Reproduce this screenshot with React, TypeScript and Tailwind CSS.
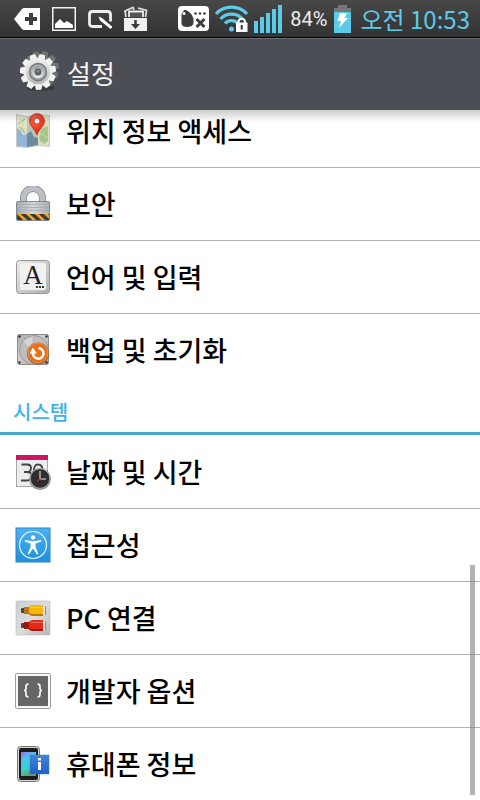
import type { ReactNode } from "react";

const TEETH = [0, 1, 2, 3, 4, 5, 6, 7, 8, 9, 10];

function Gear({ fill }: { fill: string }) {
  return (
    <g fill={fill}>
      <circle r="14" />
      {TEETH.map((n) => (
        <path key={n} d="M-4-12 L-2.7-18 H2.7 L4-12 Z" transform={`rotate(${(n * 360) / 11 + 14})`} />
      ))}
    </g>
  );
}

function GearIcon() {
  return (
    <svg width="40" height="44" viewBox="0 0 40 44" aria-hidden="true">
      <defs>
        <linearGradient id="gearFace" x1="0" y1="-18" x2="0" y2="18" gradientUnits="userSpaceOnUse">
          <stop offset="0" stopColor="#f6f6f6" />
          <stop offset="0.5" stopColor="#d6d6d6" />
          <stop offset="1" stopColor="#a4a4a4" />
        </linearGradient>
        <linearGradient id="gearHub" x1="0" y1="0" x2="0" y2="1">
          <stop offset="0" stopColor="#9a9c9e" />
          <stop offset="1" stopColor="#f2f2f2" />
        </linearGradient>
      </defs>
      <ellipse cx="21" cy="37" rx="14" ry="3" fill="#2f3237" opacity="0.7" />
      <g transform="translate(21 18)">
        <Gear fill="#707274" />
      </g>
      <g transform="translate(18 21)">
        <Gear fill="url(#gearFace)" />
        <circle r="8.5" fill="#a9abad" stroke="#75787a" strokeWidth="1.4" />
        <circle r="6" fill="url(#gearHub)" />
        <circle r="3.4" fill="#566069" />
        <circle cy="-1" r="1.6" fill="#7f8a93" />
      </g>
    </svg>
  );
}

function Icon({ children }: { children: ReactNode }) {
  return (
    <svg className="shrink-0" width="36" height="36" viewBox="0 0 36 36" aria-hidden="true">
      {children}
    </svg>
  );
}

function MapIcon() {
  return (
    <Icon>
      <defs>
        <radialGradient id="pin" cx="0.4" cy="0.3" r="0.7">
          <stop offset="0" stopColor="#ff6a50" />
          <stop offset="1" stopColor="#dd2413" />
        </radialGradient>
      </defs>
      <path d="M1 1 L12 3 L23 1 L35 2 V34 L23 33 L12 35 L1 34 Z" fill="#c9c9c4" />
      <path d="M2 2 L12 4 V34 L2 33 Z" fill="#dfe3d0" />
      <path d="M12 4 L23 2 V32 L12 34 Z" fill="#b3c8b4" />
      <path d="M23 2 L34 3 V33 L23 32 Z" fill="#d9dfc3" />
      <path d="M2 15 L5 17 L8 22 L12 21 V34 L2 33 Z" fill="#94b4da" />
      <path d="M12 21 L16 18 L19 24 L23 25 V32 L12 34 Z" fill="#6d8b9d" />
      <path d="M26 16 L33 13 V28 L29 31 L24 25 Z" fill="#a5c886" />
      <path d="M4 5 L9 9 L7 15 L12 17 M13 8 L17 14 M24 20 L33 25 M28 4 L31 12" stroke="#eed184" strokeWidth="1" fill="none" />
      <path d="M3 11 L10 6 M5 14 L10 20 M25 29 L32 19" stroke="#a6c59a" strokeWidth="1.5" fill="none" />
      <path d="M22 22 C20 16 14.5 13 14.5 8 A7.5 7.5 0 0 1 29.5 8 C29.5 13 24 16 22 22 Z" fill="url(#pin)" stroke="#b51b0e" strokeWidth="0.6" />
      <circle cx="22" cy="8" r="3" fill="#f5efee" stroke="#a81d12" strokeWidth="0.7" />
    </Icon>
  );
}

function LockIcon() {
  return (
    <Icon>
      <defs>
        <linearGradient id="lockBody" x1="0" x2="1" y1="0" y2="0">
          <stop offset="0" stopColor="#a5aaae" />
          <stop offset="0.5" stopColor="#d3d7da" />
          <stop offset="1" stopColor="#a9adb1" />
        </linearGradient>
        <clipPath id="hazard">
          <rect x="2" y="28" width="32" height="6" />
        </clipPath>
      </defs>
      <path d="M8.5 17 V12 A9.5 9.5 0 0 1 27.5 12 V17" fill="none" stroke="#888d91" strokeWidth="7" />
      <path d="M8.5 17 V12 A9.5 9.5 0 0 1 27.5 12 V17" fill="none" stroke="#bcc0c4" strokeWidth="5.4" />
      <rect x="1.5" y="15.5" width="33" height="19" rx="1" fill="url(#lockBody)" stroke="#80868b" />
      <path d="M2 18.5 H34 M2 21.5 H34 M2 24.5 H34" stroke="#a5aaae" strokeWidth="0.8" />
      <g clipPath="url(#hazard)">
        <rect x="2" y="28" width="32" height="6" fill="#f9a51b" />
        <path d="M-2 27 L7 35 M7 27 L16 35 M16 27 L25 35 M25 27 L34 35 M34 27 L43 35" stroke="#3b3b3b" strokeWidth="3.5" />
      </g>
    </Icon>
  );
}

function LanguageIcon() {
  return (
    <Icon>
      <defs>
        <linearGradient id="keycap" x1="0" y1="0" x2="1" y2="1">
          <stop offset="0" stopColor="#ececec" />
          <stop offset="1" stopColor="#b0b0b0" />
        </linearGradient>
      </defs>
      <rect x="1.5" y="1.5" width="33" height="33" rx="3" fill="url(#keycap)" stroke="#999" />
      <rect x="5" y="4" width="26" height="27" rx="2" fill="#f1f1f1" />
      <text x="18" y="25" textAnchor="middle" fontSize="27" fontFamily="Liberation Serif, serif" fill="#222">
        A
      </text>
      <path d="M21 27h2v2h-2z M24 27h2v2h-2z M27 27h2v2h-2z" fill="#333" />
    </Icon>
  );
}

function BackupIcon() {
  return (
    <Icon>
      <defs>
        <linearGradient id="disk" x1="0" y1="0" x2="1" y2="1">
          <stop offset="0" stopColor="#a8a8a8" />
          <stop offset="0.4" stopColor="#cfcfcf" />
          <stop offset="1" stopColor="#a2a2a2" />
        </linearGradient>
      </defs>
      <rect x="2.5" y="2.5" width="31" height="30" rx="2" fill="url(#disk)" stroke="#8d8d8d" />
      <circle cx="19" cy="18" r="14.5" fill="#bebebe" stroke="#999" strokeWidth="1" />
      <path d="M8 9 L18 4 L16 18 Z" fill="#d4d4d4" />
      <circle cx="4.5" cy="4.5" r="1.2" fill="#333" />
      <circle cx="31.5" cy="4.5" r="1.2" fill="#333" />
      <circle cx="4.5" cy="30.5" r="1.2" fill="#333" />
      <circle cx="31.5" cy="30.5" r="1.2" fill="#333" />
      <circle cx="23" cy="21.5" r="11" fill="#9b5a2c" />
      <circle cx="23" cy="21" r="10" fill="#ea6d17" stroke="#f3a468" strokeWidth="0.8" />
      <path d="M23.5 16 A5.3 5.3 0 1 1 18 20.5" fill="none" stroke="#fff" strokeWidth="2.6" />
      <path d="M14.5 21.5 L18 15.5 L21.8 21.5 Z" fill="#fff" />
    </Icon>
  );
}

function CalendarIcon() {
  return (
    <Icon>
      <rect x="1.5" y="1.5" width="31" height="31" fill="#ececef" stroke="#a5a5a8" />
      <rect x="1" y="1" width="32" height="5" fill="#cf1468" />
      <path
        d="M6.5 10.5 H12 Q16 10.5 16 14 Q16 18 12 18 H9 M12 18 Q16.5 18 16.5 22 Q16.5 26.5 12 26.5 H6"
        fill="none"
        stroke="#444"
        strokeWidth="1.8"
      />
      <path d="M19 18 Q18.5 10.5 23 10.5 Q27.5 10.5 27.5 16" fill="none" stroke="#444" strokeWidth="1.8" />
      <circle cx="25" cy="25" r="10.8" fill="#8f8f8f" />
      <circle cx="25" cy="24.5" r="9.8" fill="#2e2e30" stroke="#c5c5c5" strokeWidth="0.8" />
      <path d="M25 17 V25 H31" fill="none" stroke="#e5e5e5" strokeWidth="1.1" />
      <path d="M25 25 L22 27" stroke="#dd3326" strokeWidth="0.8" />
      <circle cx="25" cy="25" r="1" fill="#dd3326" />
    </Icon>
  );
}

function AccessibilityIcon() {
  return (
    <Icon>
      <defs>
        <linearGradient id="access" x1="0" y1="0" x2="0" y2="1">
          <stop offset="0" stopColor="#4db2f3" />
          <stop offset="1" stopColor="#1e90dd" />
        </linearGradient>
      </defs>
      <rect x="1" y="1" width="34" height="34" fill="url(#access)" stroke="#2b83bd" />
      <circle cx="18" cy="18" r="13.5" fill="none" stroke="#e9f6ff" strokeWidth="1.2" />
      <circle cx="18" cy="10.5" r="2.2" fill="#fff" />
      <path
        d="M10 13 L16 14 H20 L26 13 L26.3 14.5 L20.5 16.5 V20 L23.5 27 L22 27.6 L18 21.5 L14 27.6 L12.5 27 L15.5 20 V16.5 L9.7 14.5 Z"
        fill="#fff"
      />
    </Icon>
  );
}

function Plug({ main, dark }: { main: string; dark: string }) {
  return (
    <g>
      <rect x="6" y="3" width="4" height="5" rx="1" fill="#46484a" />
      <rect x="9" y="2" width="6" height="7" fill={dark} />
      <path d="M14 1.5 L17 0 H28 V11 H17 L14 9.5 Z" fill={main} />
      <path d="M14 8 L17 9 H28 V11 H17 L14 9.5 Z" fill={dark} />
      <path d="M16 2.5 H28" stroke="#fff" strokeOpacity="0.3" />
      <rect x="28" y="1" width="3" height="9" fill="#e0e4e7" />
      <path d="M30.5 1 V10" stroke="#8a8f93" />
    </g>
  );
}

function PcIcon() {
  return (
    <Icon>
      <defs>
        <linearGradient id="panel" x1="0" y1="0" x2="1" y2="1">
          <stop offset="0" stopColor="#cdcfd1" />
          <stop offset="0.5" stopColor="#dddddd" />
          <stop offset="1" stopColor="#b5b7b9" />
        </linearGradient>
      </defs>
      <rect x="1" y="1" width="34" height="34" rx="1" fill="url(#panel)" stroke="#b6b8ba" strokeWidth="0.6" />
      <g transform="translate(0 5)">
        <Plug main="#f5b70c" dark="#b97809" />
      </g>
      <g transform="translate(0 20)">
        <Plug main="#e32a1b" dark="#9f180e" />
      </g>
    </Icon>
  );
}

function DeveloperIcon() {
  return (
    <Icon>
      <rect x="0.5" y="0.5" width="35" height="35" rx="1" fill="#f7f7f7" stroke="#9c9c9c" />
      <rect x="3" y="3" width="30" height="30" fill="#666" />
      <path
        d="M13.5 11 Q11 11 11 13.5 V15.5 Q11 17.5 9 17.5 Q11 17.5 11 19.5 V21.5 Q11 24 13.5 24 M22.5 11 Q25 11 25 13.5 V15.5 Q25 17.5 27 17.5 Q25 17.5 25 19.5 V21.5 Q25 24 22.5 24"
        fill="none"
        stroke="#fff"
        strokeWidth="1.6"
      />
    </Icon>
  );
}

function PhoneIcon() {
  return (
    <Icon>
      <defs>
        <linearGradient id="screen" x1="0" y1="0" x2="0.4" y2="1">
          <stop offset="0" stopColor="#a56ae6" />
          <stop offset="0.35" stopColor="#48c6f0" />
          <stop offset="0.7" stopColor="#37cfd8" />
          <stop offset="1" stopColor="#61a557" />
        </linearGradient>
        <linearGradient id="info" x1="0" y1="0" x2="0" y2="1">
          <stop offset="0" stopColor="#3f84e2" />
          <stop offset="1" stopColor="#1f60c8" />
        </linearGradient>
      </defs>
      <rect x="2.5" y="0.5" width="22" height="35" rx="3" fill="#d5d5d5" stroke="#777" />
      <rect x="4" y="2" width="19" height="32" rx="2" fill="#1c1c1f" />
      <rect x="6" y="6" width="15" height="24" fill="url(#screen)" />
      <rect x="15" y="9" width="19" height="19" fill="url(#info)" stroke="#4d78b8" strokeWidth="0.5" />
      <path d="M23 12h3v2.5h-3z M23 16h3v8h-3z" fill="#fff" />
    </Icon>
  );
}

function StatusBar() {
  return (
    <div className="flex h-[38px] shrink-0 items-center border-b border-black bg-linear-to-b from-[#474747] to-[#333333] pl-3.5 pr-2.5">
      <div className="flex items-center gap-3">
        <svg width="26" height="24" viewBox="0 0 26 24" aria-hidden="true">
          <path d="M0 12 L8 2 Q9 1 10 1 H26 V23 H10 Q9 23 8 22 Z" fill="#fff" />
          <path d="M17 6 V18 M11 12 H23" stroke="#3f3f3f" strokeWidth="4" />
        </svg>
        <svg width="24" height="24" viewBox="0 0 24 24" aria-hidden="true">
          <rect x="0.75" y="0.75" width="22.5" height="22.5" fill="none" stroke="#f2f2f2" strokeWidth="1.5" />
          <path d="M3 21 V17 L8 12 L12 16 L15 14 L21 18 V21 Z" fill="#fff" />
        </svg>
        <svg width="24" height="24" viewBox="0 0 24 24" aria-hidden="true">
          <path d="M14 19.5 H4.5 Q1.5 19.5 1.5 16.5 V7.500 Q1.5 4.5 4.5 4.5 H19.5 Q22.5 4.5 22.5 7.5 V14.500" fill="none" stroke="#eee" strokeWidth="2.8" />
          <path d="M10.5 9.5 L14 11 L24.5 20 L22.5 22 L12 13.5 Z" fill="#fff" />
        </svg>
        <svg width="24" height="26" viewBox="0 0 24 26" aria-hidden="true">
          <path d="M2 11 L1 5 L9 1.5 L10 4 M14 2 L22.500 4.500 L21.500 11" fill="none" stroke="#ddd" strokeWidth="1.8" />
          <path d="M5 11 V5.5 H19 V11" fill="#555" stroke="#eee" strokeWidth="1.8" />
          <rect x="0" y="12" width="23" height="13" fill="#f0f0f0" />
          <path d="M11.5 14 V19" stroke="#3b3b3b" strokeWidth="2.5" />
          <path d="M7 18 H16 L11.5 23 Z" fill="#3b3b3b" />
        </svg>
      </div>
      <div className="ml-auto flex items-center gap-1.5">
        <svg width="31" height="25" viewBox="0 0 31 25" aria-hidden="true">
          <rect width="31" height="25" rx="4" fill="#fff" />
          <path d="M6 4 C10 3 15 9 15.500 13 V17 Q15 21 9 21 Q3.5 21 3.5 17 V8 Z" fill="#3d3d3d" />
          <circle cx="6" cy="7.500" r="1.500" fill="#fff" />
          <circle cx="17.500" cy="7.5" r="1.3" fill="#3d3d3d" />
          <circle cx="22" cy="7.5" r="1.3" fill="#3d3d3d" />
          <circle cx="26.500" cy="7.5" r="1.3" fill="#3d3d3d" />
          <path d="M18.5 13 L26.5 21 M26.5 13 L18.5 21" stroke="#3d3d3d" strokeWidth="3" />
        </svg>
        <svg width="33" height="28" viewBox="0 0 33 28" aria-hidden="true">
          <g fill="none" stroke="#5bcbe8" strokeWidth="3.2">
            <path d="M1 9 A21 21 0 0 1 32 9" />
            <path d="M5.5 14 A15 15 0 0 1 27.5 14" />
            <path d="M10 18.5 A9 9 0 0 1 23 18.5" />
          </g>
          <circle cx="16.5" cy="24" r="2.5" fill="#5bcbe8" />
          <path d="M23.5 18 V16.5 A3.3 3.3 0 0 1 30 16.5 V18" fill="none" stroke="#fff" strokeWidth="2" />
          <rect x="21" y="17.5" width="11.5" height="9.5" fill="#fff" />
          <path d="M26.7 20 V24.5" stroke="#333" strokeWidth="2" />
        </svg>
        <svg width="28" height="28" viewBox="0 0 28 28" fill="#5bcbe8" aria-hidden="true">
          <rect x="0" y="16" width="4" height="12" />
          <rect x="6" y="12" width="4" height="16" />
          <rect x="12" y="8" width="4" height="20" />
          <rect x="18" y="4" width="4" height="24" />
          <rect x="24" y="0" width="4" height="28" />
        </svg>
        <span className="pl-0.5 font-[Roboto,sans-serif] text-xl leading-6 text-[#ededed]">84%</span>
        <svg width="17" height="28" viewBox="0 0 17 28" aria-hidden="true">
          <path d="M4 0 H13 V3 H17 V7 H0 V3 H4 Z" fill="#777" />
          <rect y="7" width="17" height="21" fill="#5bcbe8" />
          <path d="M6 8 H13 L10.5 13 H14 L5 23 L7 16 H3.5 Z" fill="#fff" />
        </svg>
        <time className="pl-1 text-2xl leading-8 text-[#5bcbe8]">오전 10:53</time>
      </div>
    </div>
  );
}

function Row({ icon, label }: { icon: ReactNode; label: string }) {
  return (
    <li className="border-b border-[#aeb0b5] last:border-transparent">
      <a href="#" className="flex h-[72px] items-center gap-[15px] pl-[15px] text-[27px] font-medium leading-9 text-black">
        {icon}
        {label}
      </a>
    </li>
  );
}

const personal = [
  { label: "위치 정보 액세스", icon: <MapIcon /> },
  { label: "보안", icon: <LockIcon /> },
  { label: "언어 및 입력", icon: <LanguageIcon /> },
  { label: "백업 및 초기화", icon: <BackupIcon /> },
];

const system = [
  { label: "날짜 및 시간", icon: <CalendarIcon /> },
  { label: "접근성", icon: <AccessibilityIcon /> },
  { label: "PC 연결", icon: <PcIcon /> },
  { label: "개발자 옵션", icon: <DeveloperIcon /> },
  { label: "휴대폰 정보", icon: <PhoneIcon /> },
];

export default function App() {
  return (
    <div className="flex h-screen flex-col overflow-hidden bg-white font-['Noto_Sans_CJK_KR',sans-serif]">
      <StatusBar />
      <header className="flex h-18 shrink-0 items-center gap-[7px] border-t border-[#6b6d70] bg-[#4b4e55] pb-1 pl-5">
        <GearIcon />
        <h1 className="text-[26px] leading-9 text-[#f3f3f3]">설정</h1>
      </header>

      <main className="relative flex-1 overflow-hidden">
        {/* List is scrolled, so the first row sits partly under the header */}
        <div className="-mt-[15px]">
          <ul>
            {personal.map((item) => (
              <Row key={item.label} {...item} />
            ))}
          </ul>
          <h2 className="mb-px flex h-12 items-center border-b-3 border-[#4aa9c8] pt-1 pl-[13px] text-xl font-medium leading-7 text-[#3bb4e6]">
            시스템
          </h2>
          <ul>
            {system.map((item) => (
              <Row key={item.label} {...item} />
            ))}
          </ul>
        </div>

        {/* Header shadow */}
        <div className="pointer-events-none absolute inset-x-0 top-0 h-3 bg-linear-to-b from-black/20 to-transparent" />
        {/* Scroll indicator */}
        <div className="pointer-events-none absolute right-[5px] bottom-[5px] h-1/3 w-[5px] bg-[#808080]/60" />
      </main>
    </div>
  );
}
